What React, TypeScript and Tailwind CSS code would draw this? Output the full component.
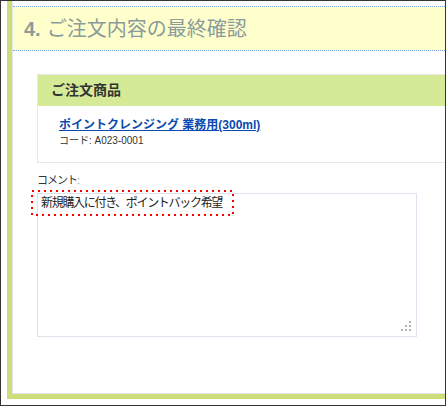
import React from 'react'

const GRIP = [
  [8, 0], [4, 4], [8, 4], [0, 8], [4, 8], [8, 8],
]

function ResizeGrip() {
  return (
    <svg width="10" height="10" className="absolute right-[6px] bottom-[6px]">
      {GRIP.map(([x, y]) => <rect key={`${x}-${y}`} x={x} y={y} width="2" height="2" fill="#b4b4b4" />)}
    </svg>
  )
}

export default function App() {
  return (
    <div className="w-[446px] h-[406px] overflow-hidden border border-[#333] bg-white pl-[6px] pb-[6px] flex font-['Liberation_Sans','Noto_Sans_CJK_JP',sans-serif]">
      <div className="w-[480px] shrink-0 border-l-[5px] border-b-[5px] border-[#cfdc7a]">
        <div className="h-full border-l border-b border-[#dfe6ee] pt-[5px]">
          {/* step heading */}
          <div className="h-[45px] bg-[#ffffcc] border-y border-dotted border-[#78a6e0] flex items-center pl-[11px] text-[20px] text-[#8b9b9b]">
            <span className="font-bold">4.</span>
            <span className="ml-[6px]">ご注文内容の最終確認</span>
          </div>

          <div className="ml-[24px] mt-[23px]">
            <div className="border border-[#e8e8e8]">
              <div className="h-[31px] bg-[#d4ea96] flex items-center pl-[13px] text-[14px] font-bold text-[#333]">
                ご注文商品
              </div>
              <div className="pl-[21px] pt-[11px] pb-[14px]">
                <a href="#" className="block text-[12px] leading-[16px] font-bold text-[#0a4ab0] underline">
                  ポイントクレンジング 業務用(300ml)
                </a>
                <p className="text-[10px] leading-[15px] text-[#333]">コード: A023-0001</p>
              </div>
            </div>

            <p className="mt-[9px] text-[11px] leading-[16px] tracking-[-1px] text-[#333]">
              コメント<span className="text-[#999]">:</span>
            </p>

            <div className="relative mt-[5px] w-[380px] h-[144px]">
              <div className="w-full h-full border border-[#dde3ed] bg-white pl-[3px] pt-[1px] text-[12px] leading-[16px] tracking-[-1.3px] text-[#222]">
                新規購入に付き、ポイントバック希望
              </div>
              <ResizeGrip />
              {/* highlight annotation */}
              <svg width="203" height="26" className="absolute left-[-6px] top-[-3px] pointer-events-none">
                <rect x="1" y="1" width="201" height="24" fill="none" stroke="#ff0000" strokeWidth="2" strokeDasharray="2 4" />
              </svg>
            </div>
          </div>
        </div>
      </div>
    </div>
  )
}
